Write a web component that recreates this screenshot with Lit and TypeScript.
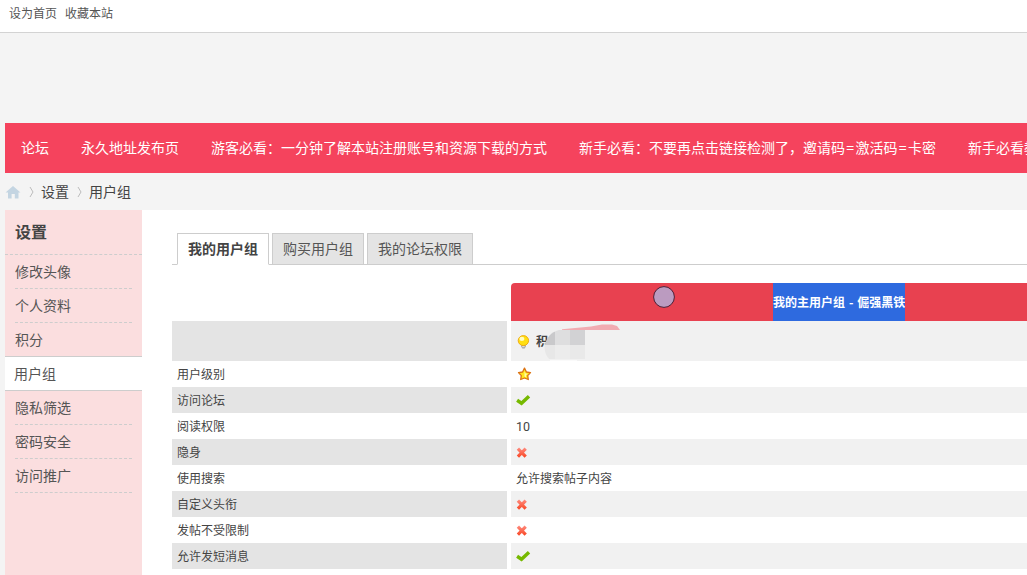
import { LitElement, html, svg, css, TemplateResult } from "lit";
import { customElement } from "lit/decorators.js";
import { classMap } from "lit/directives/class-map.js";

const NAV = [
  "论坛",
  "永久地址发布页",
  "游客必看：一分钟了解本站注册账号和资源下载的方式",
  "新手必看：不要再点击链接检测了，邀请码=激活码=卡密",
  "新手必看教程",
];
const SIDE = ["修改头像", "个人资料", "积分", "用户组", "隐私筛选", "密码安全", "访问推广"];
const TABS = ["我的用户组", "购买用户组", "我的论坛权限"];
const ROWS: [string, string][] = [
  ["用户级别", "star"],
  ["访问论坛", "yes"],
  ["阅读权限", "10"],
  ["隐身", "no"],
  ["使用搜索", "允许搜索帖子内容"],
  ["自定义头衔", "no"],
  ["发帖不受限制", "no"],
  ["允许发短消息", "yes"],
];

const ICONS: Record<string, TemplateResult> = {
  star: html`<svg class="ico" width="16" height="16" viewBox="0 0 16 16">
    <path d="M8.5 2.1l1.9 3.9 4.1.6-2.8 3 .6 3.9-3.8-1.5-3.8 1.5.6-3.9-2.8-3 4.1-.6z" fill="#ffe81c" stroke="#dc7414" stroke-width="1.3" stroke-linejoin="round" />
    <path d="M8.5 5.2l1 2.2 2 .4-1.6 1.5.3 2-1.7-.9z" fill="#fffbb0" />
  </svg>`,
  yes: html`<svg class="ico" width="16" height="16" viewBox="0 0 16 16">
    <path d="M1.1 8.3L5.5 11.2L13 4.3" fill="none" stroke="#76b900" stroke-width="3.5" />
  </svg>`,
  no: html`<svg class="ico" width="16" height="16" viewBox="0 0 16 16">
    <defs><linearGradient id="r" x1="0" y1="3" x2="0" y2="14" gradientUnits="userSpaceOnUse">
      <stop offset="0" stop-color="#ff9186" /><stop offset="1" stop-color="#f9431f" /></linearGradient></defs>
    <path d="M1.9 4.6L9.7 12.6M9.7 4.6L1.9 12.6" fill="none" stroke="url(#r)" stroke-width="3.2" />
  </svg>`,
};

@customElement("app-root")
export class AppRoot extends LitElement {
  static styles = css`
    :host {
      display: block;
      height: 575px;
      overflow: hidden;
      position: relative;
      background: #f4f4f4;
      color: #444;
      font: 12px/18px "Noto Sans CJK SC", sans-serif;
      white-space: nowrap;
    }
    * { box-sizing: border-box; }
    svg { display: block; flex: none; }
    .top {
      height: 33px;
      padding: 4px 9px 0;
      background: #fff;
      border-bottom: 1px solid #d3d3d3;
      display: flex;
      gap: 8px;
      color: #555;
    }
    .nav {
      margin: 90px 0 0 5px;
      height: 50px;
      padding-left: 16px;
      background: #f5435d;
      color: #fff;
      display: flex;
      gap: 32px;
      font-size: 14px;
      line-height: 49px;
      overflow: hidden;
    }
    .item { flex: none; }
    .eq { padding: 0 1.35px; }
    .crumbs {
      height: 37px;
      padding: 0 0 2px 5px;
      display: flex;
      align-items: center;
      font-size: 14px;
      color: #444;
    }
    .home { margin-top: 2px; }
    .arrow { margin: 2px 7px 0 8px; }
    .main {
      margin-left: 5px;
      height: 365px;
      background: #fff;
      display: flex;
    }
    .side { width: 137px; flex: none; background: #fbdedf; font-size: 14px; color: #555; }
    .side-title {
      height: 45px;
      padding-left: 10px;
      font: bold 16px/42px "Noto Sans CJK SC", sans-serif;
      color: #444;
      border-bottom: 1px dashed #cdcdcd;
    }
    .link {
      height: 34px;
      margin: 0 10px;
      line-height: 33px;
      border-bottom: 1px dashed #cdcdcd;
    }
    .link.before { margin: 0; padding-left: 10px; border-bottom: 1px solid #cdcdcd; }
    .link.on {
      margin: 0;
      padding-left: 9px;
      background: #fff;
      border-bottom: 1px solid #cdcdcd;
    }
    .content { flex: 1; min-width: 0; padding: 23px 0 0 30px; overflow: hidden; }
    .tabs {
      display: flex;
      gap: 3px;
      height: 32px;
      padding-left: 5px;
      border-bottom: 1px solid #cdcdcd;
    }
    .tab {
      height: 32px;
      padding: 0 10px;
      border: 1px solid #cdcdcd;
      background: #e4e4e4;
      font-size: 14px;
      line-height: 28px;
      color: #555;
    }
    .tab.on { background: #fff; border-bottom-color: #fff; font-weight: bold; color: #444; }
    .table {
      margin-top: 18px;
      display: grid;
      grid-template-columns: 335px 656px;
      grid-template-rows: 38px 40px;
      grid-auto-rows: 26px;
      column-gap: 4px;
    }
    .head {
      background: #e84150;
      border-radius: 4px 0 0 0;
      display: flex;
      justify-content: center;
      color: #fff;
      font-weight: bold;
      line-height: 38px;
    }
    .picked { width: 132px; background: #2e6adf; word-spacing: 1.2px; }
    .cell { display: flex; align-items: center; padding-left: 5px; }
    .label.shade { background: #e4e4e4; }
    .value.shade { background: #f1f1f1; }
    .credit { font-weight: bold; gap: 5px; }
    .ten { font-family: Roboto, sans-serif; font-size: 12.5px; padding-top: 1px; }
    .overlay { position: absolute; left: 540px; top: 280px; pointer-events: none; }
  `;

  private navText(t: string) {
    const parts = t.split("=");
    return parts.map((p, i) => (i ? html`<span class="eq">=</span>${p}` : p));
  }

  private value(v: string) {
    if (ICONS[v]) return ICONS[v];
    return html`<span class=${v === "10" ? "ten" : ""}>${v}</span>`;
  }

  private overlay() {
    return svg`
      <path d="M22 50V49.3L35 48L51 46.5L62 44.5H72L77 46L80 50Z" fill="#f1abb1" />
      <clipPath id="m"><path d="M19 50H45V79H9C6 75 4.5 72 4.5 66C6 58 11 52 19 50Z" /></clipPath>
      <g clip-path="url(#m)">
        <path d="M0 49H15V65H0Z" fill="#c9c9cb" /><path d="M15 49H30V65H15Z" fill="#dededf" />
        <path d="M30 49H45V65H30Z" fill="#d2d2d4" /><path d="M0 65H15V80H0Z" fill="#e7e7e7" />
        <path d="M15 65H30V80H15Z" fill="#ececec" /><path d="M30 65H45V80H30Z" fill="#e9e9e9" />
      </g>
      <path d="M10 80H37V81H10Z" fill="#fafafa" />
      <circle cx="124" cy="17" r="10.4" fill="#bb9bc0" stroke="#4d2138" stroke-width="1" />`;
  }

  render() {
    const arrow = html`<svg class="arrow" width="5" height="12" viewBox="0 0 5 12">
      <path d="M1 1l3 5-3 5" fill="none" stroke="#bcbcbc" /></svg>`;
    return html`
      <div class="top"><span>设为首页</span><span>收藏本站</span></div>
      <div class="nav">${NAV.map((t) => html`<span class="item">${this.navText(t)}</span>`)}</div>
      <div class="crumbs">
        <svg class="home" width="16" height="14" viewBox="0 0 16 14">
          <path d="M8 1L15.5 7.5H13.5V13.5H9.8V9H6.6V13.5H3V7.5H.5Z" fill="#c4d5e2" />
        </svg>
        ${arrow}<span>设置</span>${arrow}<span>用户组</span>
      </div>
      <div class="main">
        <div class="side">
          <div class="side-title">设置</div>
          ${SIDE.map((t, i) => html`<div class=${classMap({ link: true, before: i === 2, on: i === 3 })}>${t}</div>`)}
        </div>
        <div class="content">
          <div class="tabs">
            ${TABS.map((t, i) => html`<div class=${classMap({ tab: true, on: i === 0 })}>${t}</div>`)}
          </div>
          <div class="table">
            <div></div>
            <div class="head"><span class="picked">我的主用户组 - 倔强黑铁</span></div>
            <div class="cell label shade"></div>
            <div class="cell value shade credit">
              <svg width="15" height="16" viewBox="0 0 15 16">
                <path d="M5.2 12h4.6v1.8L8.6 15.5H6.4L5.2 13.8z" fill="#a5a5a5" />
                <path d="M6.2 13.2h2.4v1H6.2z" fill="#eee" />
                <ellipse cx="7.4" cy="7.6" rx="5.2" ry="5" fill="#ffdf12" stroke="#eea60a" stroke-width=".9" />
                <ellipse cx="5.9" cy="5.9" rx="2.5" ry="2.1" fill="#fffbc0" />
              </svg>
              <span>积分</span>
            </div>
            ${ROWS.map(([label, v], i) => html`
              <div class=${classMap({ cell: true, label: true, shade: i % 2 === 1 })}>${label}</div>
              <div class=${classMap({ cell: true, value: true, shade: i % 2 === 1 })}>${this.value(v)}</div>`)}
          </div>
        </div>
      </div>
      <svg class="overlay" width="150" height="85" viewBox="0 0 150 85">${this.overlay()}</svg>
    `;
  }
}
